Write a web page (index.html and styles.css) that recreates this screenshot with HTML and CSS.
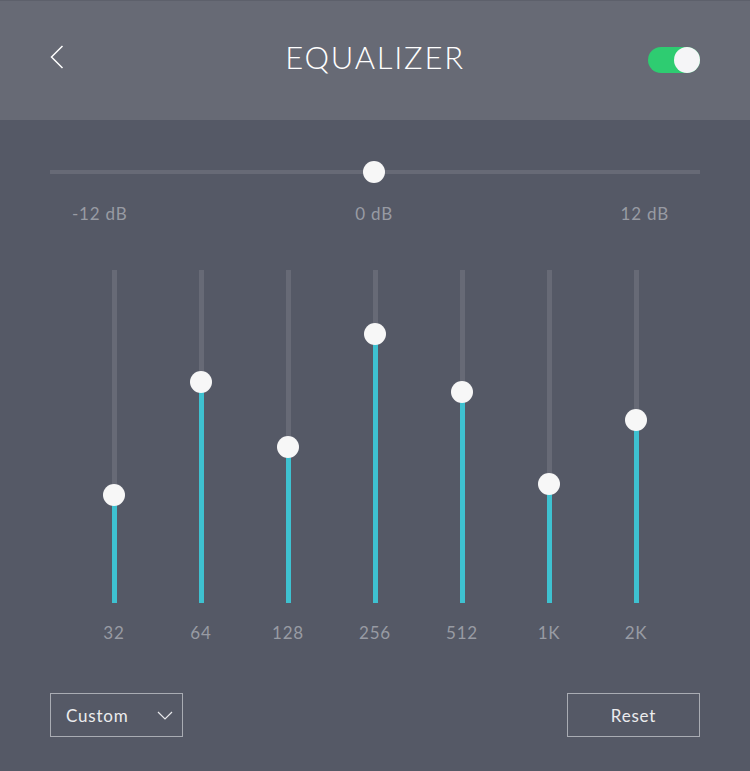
FILE: index.html
```html
<!DOCTYPE html>
<html lang="en">
<head>
<meta charset="utf-8">
<title>Equalizer</title>
<link rel="stylesheet" href="styles.css">
</head>
<body>
<div class="app">
  <header class="topbar">
    <button class="back" aria-label="Back">
      <svg width="14" height="24" viewBox="0 0 14 24"><polyline points="12.5,1 1.5,12 12.5,23" fill="none" stroke="#ffffff" stroke-width="1.5"/></svg>
    </button>
    <h1 class="title">EQUALIZER</h1>
    <div class="toggle-wrap"><div class="toggle"><span class="toggle-knob"></span></div></div>
  </header>
  <main class="content">
    <section class="gain">
      <div class="gain-track"><span class="gain-knob"></span></div>
      <div class="gain-labels"><span>-12 dB</span><span>0 dB</span><span>12 dB</span></div>
    </section>
    <section class="bands">
      <div class="band" style="--v:32.4%"><div class="band-track"><div class="band-fill"></div><span class="band-knob"></span></div><span class="band-label">32</span></div>
      <div class="band" style="--v:66.4%"><div class="band-track"><div class="band-fill"></div><span class="band-knob"></span></div><span class="band-label">64</span></div>
      <div class="band" style="--v:46.8%"><div class="band-track"><div class="band-fill"></div><span class="band-knob"></span></div><span class="band-label">128</span></div>
      <div class="band" style="--v:80.8%"><div class="band-track"><div class="band-fill"></div><span class="band-knob"></span></div><span class="band-label">256</span></div>
      <div class="band" style="--v:63.4%"><div class="band-track"><div class="band-fill"></div><span class="band-knob"></span></div><span class="band-label">512</span></div>
      <div class="band" style="--v:35.7%"><div class="band-track"><div class="band-fill"></div><span class="band-knob"></span></div><span class="band-label">1K</span></div>
      <div class="band" style="--v:55%"><div class="band-track"><div class="band-fill"></div><span class="band-knob"></span></div><span class="band-label">2K</span></div>
    </section>
    <section class="actions">
      <button class="btn select">
        <span>Custom</span>
        <svg width="16" height="9" viewBox="0 0 16 9"><polyline points="1,1 8,8 15,1" fill="none" stroke="#e8e9ec" stroke-width="1.2"/></svg>
      </button>
      <button class="btn reset">Reset</button>
    </section>
  </main>
</div>
</body>
</html>
```
FILE: styles.css
```css
* { box-sizing: border-box; }
html, body { margin: 0; padding: 0; }
body {
  background: #555966;
  font-family: Lato, "Open Sans", sans-serif;
  color: #f0f0f0;
}
.app {
  width: 750px;
  height: 771px;
  background: #555966;
  overflow: hidden;
}
.topbar {
  height: 120px;
  background: #676a75;
  border-top: 1px solid #5d606b;
  display: grid;
  grid-template-columns: 1fr auto 1fr;
  align-items: center;
  padding: 0 50px 8px 50px;
}
.back {
  justify-self: start;
  background: none;
  border: 0;
  padding: 0;
  margin: 0;
  width: 14px;
  height: 24px;
  display: flex;
}
.title {
  margin: 0;
  font-weight: 300;
  font-size: 31px;
  letter-spacing: 1.8px;
  color: #ffffff;
  line-height: 36px;
}
.toggle-wrap {
  justify-self: end;
  display: flex;
  padding-top: 7px;
}
.toggle {
  width: 52px;
  height: 26px;
  border-radius: 13px;
  background: #2ecc71;
  position: relative;
}
.toggle-knob {
  position: absolute;
  right: 0;
  top: 0;
  width: 26px;
  height: 26px;
  border-radius: 50%;
  background: #f5f5f7;
}
.content {
  padding: 0 50px;
}
.gain-track {
  margin-top: 50px;
  height: 4px;
  background: #676a76;
  position: relative;
}
.gain-knob {
  position: absolute;
  left: 50%;
  top: 50%;
  width: 22px;
  height: 22px;
  margin-left: -12px;
  margin-top: -11px;
  border-radius: 50%;
  background: #f7f7f7;
}
.gain-labels {
  margin-top: 30px;
  display: flex;
  justify-content: space-between;
  padding: 0 31px 0 22px;
  font-size: 17px;
  line-height: 20px;
  letter-spacing: 0.8px;
  color: #989ba3;
}
.bands {
  margin-top: 46px;
  display: grid;
  grid-template-columns: repeat(7, 87px);
  justify-content: center;
}
.band {
  display: flex;
  flex-direction: column;
  align-items: center;
}
.band-track {
  position: relative;
  width: 5px;
  height: 333px;
  background: #676a76;
}
.band-fill {
  position: absolute;
  left: 0;
  bottom: 0;
  width: 100%;
  height: var(--v);
  background: #3ec1d0;
}
.band-knob {
  position: absolute;
  left: 50%;
  bottom: var(--v);
  width: 22px;
  height: 22px;
  border-radius: 50%;
  background: #f7f7f7;
  transform: translate(-50%, 50%);
}
.band-label {
  margin-top: 20px;
  font-size: 17px;
  line-height: 20px;
  letter-spacing: 0.8px;
  color: #989ba3;
}
.actions {
  margin-top: 50px;
  display: flex;
  justify-content: space-between;
}
.btn {
  width: 133px;
  height: 44px;
  background: transparent;
  border: 1px solid #a9acb3;
  color: #ececee;
  font-family: Lato, "Open Sans", sans-serif;
  font-weight: 400;
  font-size: 17px;
  letter-spacing: 0.8px;
  margin: 0;
}
.select {
  display: flex;
  align-items: center;
  justify-content: space-between;
  padding: 0 9px 0 15px;
}
.select svg { display: block; }
.reset {
  display: flex;
  align-items: center;
  justify-content: center;
  padding: 0;
}
```
